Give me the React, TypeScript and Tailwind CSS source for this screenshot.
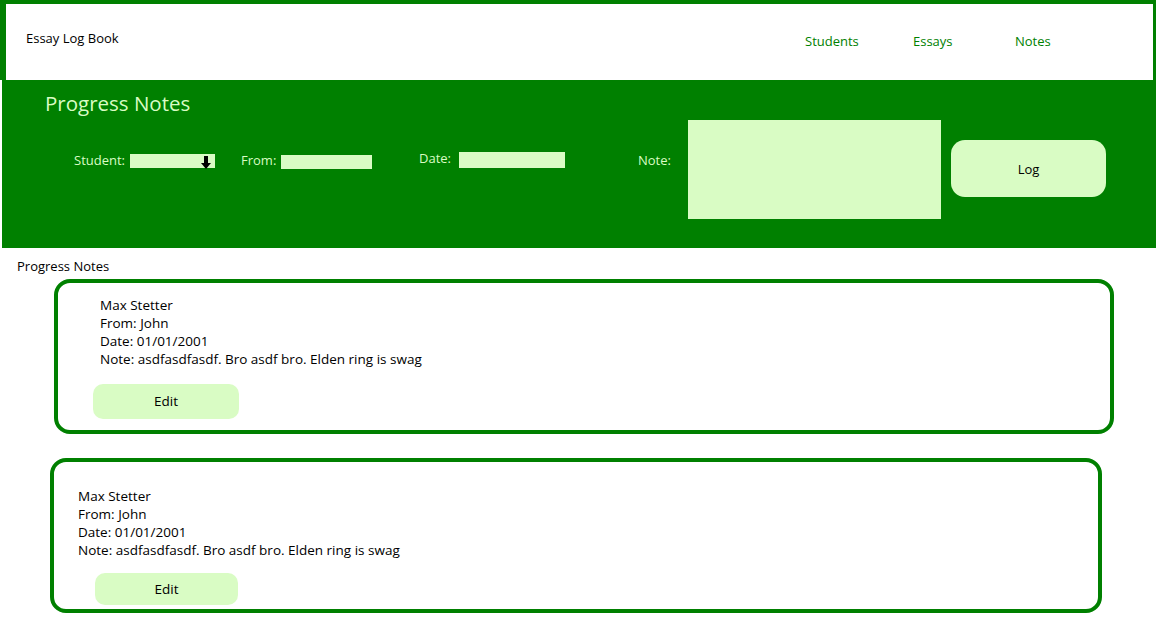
import React from "react";

type Note = {
  student: string;
  from: string;
  date: string;
  note: string;
};

const notes: Note[] = [
  { student: "Max Stetter", from: "John", date: "01/01/2001", note: "asdfasdfasdf. Bro asdf bro. Elden ring is swag" },
  { student: "Max Stetter", from: "John", date: "01/01/2001", note: "asdfasdfasdf. Bro asdf bro. Elden ring is swag" },
];

const font = { fontFamily: '"Comic Sans MS", "Open Sans", sans-serif' };

function DownArrow() {
  return (
    <svg width="10" height="13" viewBox="0 0 10 13" className="absolute right-[4px] top-[2px]">
      <rect x="3" y="0" width="4" height="7" fill="#000" />
      <polygon points="0,7 10,7 5,13" fill="#000" />
    </svg>
  );
}

function NoteCard({ item, variant }: { item: Note; variant: 1 | 2 }) {
  const first = variant === 1;
  return (
    <div
      className={
        first
          ? "ml-[54px] h-[155px] w-[1060px] rounded-[16px] border-4 border-[#008000] pl-[42px] pt-[13px]"
          : "ml-[50px] mt-[24px] h-[155px] w-[1052px] rounded-[16px] border-4 border-[#008000] pl-[24px] pt-[25px]"
      }
    >
      <div className="text-[13.5px] leading-[18px] text-black">
        <div>{item.student}</div>
        <div>From: {item.from}</div>
        <div>Date: {item.date}</div>
        <div>Note: {item.note}</div>
      </div>
      <button
        className={
          first
            ? "-ml-[7px] mt-[16px] flex h-[35px] w-[146px] items-center justify-center rounded-[10px] bg-[#d9fcc4] text-[13.5px] text-black"
            : "ml-[17px] mt-[14px] flex h-[32px] w-[143px] items-center justify-center rounded-[10px] bg-[#d9fcc4] text-[13.5px] text-black"
        }
      >
        Edit
      </button>
    </div>
  );
}

export default function App() {
  return (
    <div className="min-h-[641px] w-full bg-white" style={font}>
      {/* Top bar */}
      <header className="flex h-[80px] w-full border-l-[6px] border-r-[3px] border-t-4 border-[#008000] bg-white">
        <div className="pl-[20px] pt-[26px] text-[13px] leading-[16px] text-black">Essay Log Book</div>
        <nav className="ml-auto flex w-[348px] pt-[29px] text-[13px] leading-[16px] text-[#008000]">
          <a className="w-[108px]">Students</a>
          <a className="w-[102px]">Essays</a>
          <a className="flex-1">Notes</a>
        </nav>
      </header>

      {/* Entry form */}
      <section className="ml-[2px] h-[168px] bg-[#008000] pl-[43px] pt-[11px] text-[#d9fcc4]">
        <h1 className="text-[20.5px] leading-[24px]">Progress Notes</h1>
        <div className="mt-[5px] flex items-start text-[13px] leading-[16px]">
          <label className="ml-[29px] mt-[32px] w-[56px]">Student:</label>
          <div className="relative mt-[34px] h-[14px] w-[85px] bg-[#d9fcc4]">
            <DownArrow />
          </div>
          <label className="ml-[26px] mt-[32px] w-[40px]">From:</label>
          <div className="mt-[35px] h-[14px] w-[91px] bg-[#d9fcc4]" />
          <label className="ml-[47px] mt-[30px] w-[40px]">Date:</label>
          <div className="mt-[32px] h-[16px] w-[106px] bg-[#d9fcc4]" />
          <label className="ml-[73px] mt-[32px] w-[50px]">Note:</label>
          <div className="h-[99px] w-[253px] bg-[#d9fcc4]" />
          <button className="ml-[10px] mt-[20px] flex h-[57px] w-[155px] items-center justify-center rounded-[14px] bg-[#d9fcc4] text-[13px] text-black">
            Log
          </button>
        </div>
      </section>

      {/* List */}
      <div className="pl-[17px] pt-[10px] text-[13px] leading-[16px] text-black">Progress Notes</div>
      <div className="mt-[5px]">
        <NoteCard item={notes[0]} variant={1} />
        <NoteCard item={notes[1]} variant={2} />
      </div>
    </div>
  );
}
